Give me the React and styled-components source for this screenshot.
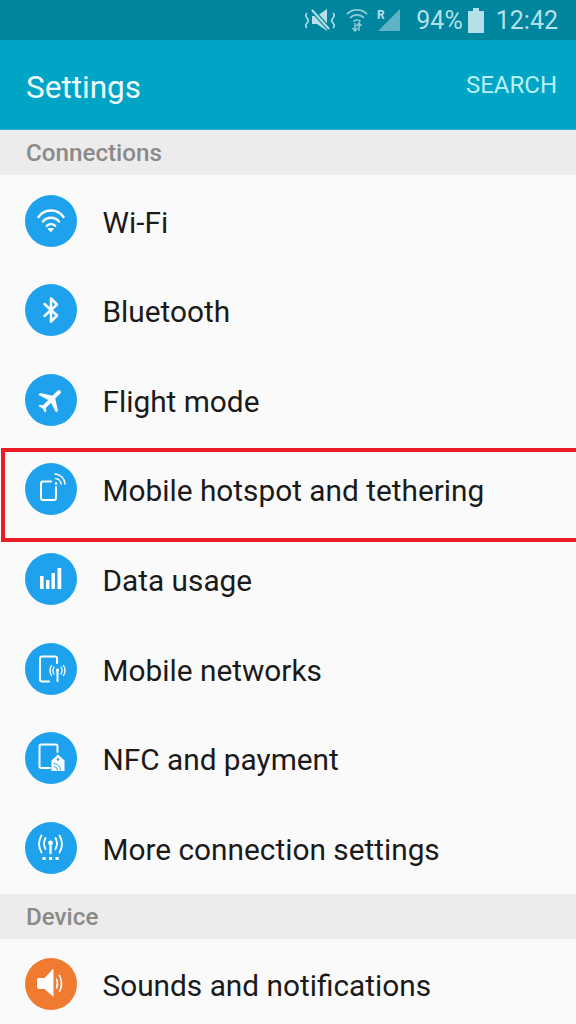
import React from 'react'
import styled, { createGlobalStyle } from 'styled-components'

const GlobalStyle = createGlobalStyle`
html, body {
  margin: 0;
  padding: 0;
  background: #fafafa;
  overflow: hidden;
}
body {
  font-family: 'Roboto', sans-serif;
}
`
const Page = styled.div`
width: 576px;
height: 1024px;
overflow: hidden;
display: flex;
flex-direction: column;
`
const StatusBar = styled.div`
height: 40px;
flex: none;
background: #00859e;
display: flex;
align-items: center;
justify-content: flex-end;
padding: 0 18px 0 0;
box-sizing: border-box;
color: #b5e0ea;
font-size: 25px;
`
const StatusIcon = styled.svg`
display: block;
flex: none;
margin-right: ${(p) => p.$gap}px;
`
const Battery = styled(StatusIcon)`
margin-left: 5px;
`
const Toolbar = styled.div`
height: 90px;
flex: none;
background: #00a5c5;
display: flex;
align-items: center;
justify-content: space-between;
padding: 0 19px 0 26px;
box-sizing: border-box;
border-bottom: 1px solid #29b5cf;
`
const Title = styled.div`
color: #f2fcfe;
font-size: 31.5px;
padding-top: 5px;
`
const SearchBtn = styled.div`
color: #b9f0f7;
font-size: 24px;
`
const SectionHeader = styled.div`
height: 45px;
flex: none;
background: #ececec;
display: flex;
align-items: center;
padding: 1px 26px 0;
box-sizing: border-box;
color: #8a8a8a;
font-size: 24.2px;
font-weight: 500;
`
const RowList = styled.div`
flex: none;
padding-bottom: 2px;
`
const Row = styled.div`
height: 89.57px;
flex: none;
display: flex;
align-items: center;
padding: 2px 0 0 25px;
box-sizing: border-box;
position: relative;
&::after {
  content: '';
  display: ${(p) => (p.$marked ? 'block' : 'none')};
  position: absolute;
  z-index: 1;
  left: 1px;
  right: -6px;
  top: 4px;
  bottom: -8.5px;
  border: 4px solid #ed1c24;
}
`
const IconCircle = styled.div`
width: 52px;
height: 52px;
flex: none;
border-radius: 50%;
background: ${(p) => p.$color || '#1fa2ee'};
display: flex;
align-items: center;
justify-content: center;
`
const Label = styled.div`
margin-left: 25.5px;
padding-top: 3px;
font-size: 29.8px;
color: #1a1a1a;
white-space: nowrap;
`
const Glyph = styled.svg`
width: 52px;
height: 52px;
display: block;
fill: none;
stroke: #fff;
stroke-width: 2;
stroke-linecap: round;
stroke-linejoin: round;
`

const WifiIcon = () => (
  <Glyph viewBox="0 0 52 52">
    <path d="M13.5 22 A15.3 15.3 0 0 1 38.5 22" strokeWidth="2.4" />
    <path d="M18 26.5 A10.5 10.5 0 0 1 34 26.5" strokeWidth="2.4" />
    <path d="M21.8 30.8 A6 6 0 0 1 30.2 30.8" strokeWidth="2.4" />
    <path d="M23.4 33.6 L28.6 33.6 L26 36.6 Z" fill="#fff" strokeWidth="1" />
  </Glyph>
)
const BluetoothIcon = () => (
  <Glyph viewBox="0 0 52 52">
    <path d="M19.5 20 L32 31.5 L26 37.5 L26 14.5 L32 20.5 L19.5 32" strokeWidth="2.5" />
  </Glyph>
)
const PlaneIcon = () => (
  <Glyph viewBox="0 0 52 52">
    <path
      transform="rotate(45 26 26) translate(26 26) scale(1.32) translate(-11.5 -12)"
      d="M21 16v-2l-8-5V3.5c0-.83-.67-1.5-1.5-1.5S10 2.67 10 3.5V9l-8 5v2l8-2.5V19l-2 1.5V22l3.5-1 3.5 1v-1.5L13 19v-5.5l8 2.5z"
      fill="#fff"
      stroke="none"
    />
  </Glyph>
)
const HotspotIcon = () => (
  <Glyph viewBox="0 0 52 52">
    <path d="M26 18.5 L18 18.5 Q16 18.5 16 20.5 L16 35 Q16 37 18 37 L29 37 Q31 37 31 35 L31 24" strokeWidth="2" />
    <path d="M30.5 15.5 A6 6 0 0 1 36 21" strokeWidth="1.5" />
    <path d="M30 11 A10.5 10.5 0 0 1 40 21" strokeWidth="1.5" />
    <circle cx="31" cy="20.5" r="1.3" fill="#fff" stroke="none" />
  </Glyph>
)
const DataIcon = () => (
  <Glyph viewBox="0 0 52 52">
    <rect x="15" y="23" width="3.6" height="13" fill="#fff" stroke="none" />
    <rect x="21" y="27" width="3.4" height="9" fill="#fff" stroke="none" />
    <rect x="26.5" y="20" width="3.4" height="16" fill="#fff" stroke="none" />
    <rect x="32.5" y="15" width="3.8" height="21" fill="#fff" stroke="none" />
  </Glyph>
)
const NetworksIcon = () => (
  <Glyph viewBox="0 0 52 52">
    <path d="M24 38.5 L17 38.5 Q15 38.5 15 36.5 L15 15.5 Q15 13.5 17 13.5 L30 13.5 Q32 13.5 32 15.5 L32 20" strokeWidth="2" />
    <path d="M32.5 27 L32.5 38" strokeWidth="2" />
    <circle cx="32.5" cy="27" r="1.6" fill="#fff" stroke="none" />
    <path d="M29 24 Q26.8 27.5 29 31 M36 24 Q38.2 27.5 36 31" strokeWidth="1.3" />
    <path d="M26.5 22.5 Q23.5 27.5 26.5 32.5 M38.5 22.5 Q41.5 27.5 38.5 32.5" strokeWidth="1.3" />
  </Glyph>
)
const NfcIcon = () => (
  <Glyph viewBox="0 0 52 52">
    <path d="M25 36 L16.5 36 Q14.5 36 14.5 34 L14.5 14.5 Q14.5 12.5 16.5 12.5 L30.5 12.5 Q32.5 12.5 32.5 14.5 L32.5 20" strokeWidth="2" />
    <path d="M33 22.5 L26.5 28.5 L26.5 39 L39.5 39 L39.5 28.5 Z" fill="#fff" stroke="none" />
    <circle cx="33" cy="27.5" r="1.3" fill="#1fa2ee" stroke="none" />
    <path d="M29 34.5 A3.5 3.5 0 0 1 32.5 38 M29 31.5 A6.5 6.5 0 0 1 35.5 38" stroke="#1fa2ee" strokeWidth="1" />
  </Glyph>
)
const MoreIcon = () => (
  <Glyph viewBox="0 0 52 52">
    <circle cx="25.5" cy="21" r="2.4" fill="#fff" stroke="none" />
    <path d="M25.5 22 L25.5 31" strokeWidth="2.4" />
    <path d="M20.5 16 Q17.5 21.5 20.5 27 M30.5 16 Q33.5 21.5 30.5 27" strokeWidth="1.9" />
    <path d="M16.5 13.5 Q11.5 22 16.5 30.5 M34.5 13.5 Q39.5 22 34.5 30.5" strokeWidth="1.9" />
    <rect x="17.5" y="35" width="3.2" height="3" fill="#fff" stroke="none" />
    <rect x="24" y="35" width="3.2" height="3" fill="#fff" stroke="none" />
    <rect x="30.5" y="35" width="3.2" height="3" fill="#fff" stroke="none" />
  </Glyph>
)
const SoundIcon = () => (
  <Glyph viewBox="0 0 52 52">
    <path d="M14 20 L19.5 20 L28 11 Q28.5 10.6 28.5 11.5 L28.5 38 Q28.5 38.9 28 38.5 L19.5 31 L14 31 Q12 31 12 29 L12 22 Q12 20 14 20 Z" fill="#fff" stroke="none" />
    <path d="M31.5 21 Q33.5 25.5 31.5 30" strokeWidth="1.6" />
    <path d="M34.5 17.5 Q38.5 25.5 34.5 33.5" strokeWidth="1.6" />
  </Glyph>
)

const connections = [
  { name: 'Wi-Fi', icon: <WifiIcon /> },
  { name: 'Bluetooth', icon: <BluetoothIcon /> },
  { name: 'Flight mode', icon: <PlaneIcon /> },
  { name: 'Mobile hotspot and tethering', icon: <HotspotIcon />, marked: true },
  { name: 'Data usage', icon: <DataIcon /> },
  { name: 'Mobile networks', icon: <NetworksIcon /> },
  { name: 'NFC and payment', icon: <NfcIcon /> },
  { name: 'More connection settings', icon: <MoreIcon /> },
]

export default function App() {
  return (
    <>
      <GlobalStyle />
      <Page>
        <StatusBar>
          <StatusIcon $gap={10} width="32" height="24" viewBox="0 0 32 24" fill="none">
            <path d="M8 8 L13 8 L23 1 L23 23 L13 16 L8 16 Z" fill="#b5e0ea" />
            <path d="M8 2 L26 22" stroke="#00859e" strokeWidth="4.5" />
            <path d="M8 2 L25 21" stroke="#b5e0ea" strokeWidth="2" />
            <path d="M3 5 Q0.5 7.5 3 10 Q5.5 12.5 3 15 Q0.5 17.5 3 20 M29 5 Q31.5 7.5 29 10 Q26.5 12.5 29 15 Q31.5 17.5 29 20" stroke="#b5e0ea" strokeWidth="1.6" />
          </StatusIcon>
          <StatusIcon $gap={9} width="22" height="24" viewBox="0 0 22 24" fill="none" stroke="#8fcbd9">
            <path d="M1 6 A14 14 0 0 1 21 6" strokeWidth="1.8" />
            <path d="M4 10 A9.5 9.5 0 0 1 18 10" strokeWidth="1.8" />
            <path d="M7.5 13.5 A5 5 0 0 1 14.5 13.5" strokeWidth="1.8" />
            <path d="M9 15 L9 23 M6.5 20 L9 23 L11.5 20 M13 23 L13 15 M10.5 18 L13 15 L15.5 18" strokeWidth="1.5" />
          </StatusIcon>
          <StatusIcon $gap={15} width="24" height="24" viewBox="0 0 24 24">
            <path d="M23 1 L23 23 L1 23 Z" fill="#5fb3c6" />
            <text x="0" y="11" fontSize="12" fontWeight="700" fontFamily="Roboto" fill="#b5e0ea">R</text>
          </StatusIcon>
          <span>94%</span>
          <Battery $gap={12} width="16" height="25" viewBox="0 0 16 25">
            <path d="M5 0 L11 0 L11 3 L16 3 L16 25 L0 25 L0 3 L5 3 Z" fill="#b5e0ea" />
          </Battery>
          <span>12:42</span>
        </StatusBar>
        <Toolbar>
          <Title>Settings</Title>
          <SearchBtn>SEARCH</SearchBtn>
        </Toolbar>
        <SectionHeader>Connections</SectionHeader>
        <RowList>
          {connections.map((item) => (
            <Row key={item.name} $marked={item.marked}>
              <IconCircle>{item.icon}</IconCircle>
              <Label>{item.name}</Label>
            </Row>
          ))}
        </RowList>
        <SectionHeader>Device</SectionHeader>
        <Row>
          <IconCircle $color="#f07a30"><SoundIcon /></IconCircle>
          <Label>Sounds and notifications</Label>
        </Row>
      </Page>
    </>
  )
}
